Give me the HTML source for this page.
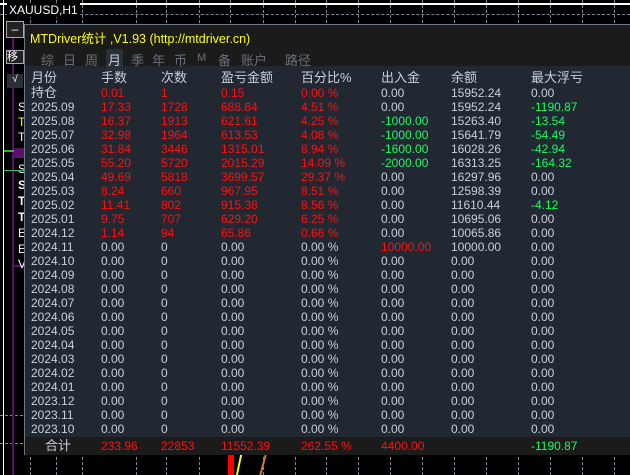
<!DOCTYPE html>
<html><head><meta charset="utf-8"><style>
*{margin:0;padding:0;box-sizing:border-box}
body{width:630px;height:475px;background:#000;position:relative;overflow:hidden;font-family:"Liberation Sans","Noto Sans CJK SC",sans-serif;font-size:12px}
.a{position:absolute}
.dh{position:absolute;left:0;width:630px;border-top:1px dashed #7a8a9a}
.dv{position:absolute;top:0;height:475px;border-left:1px dashed #7a8a9a}
#p{position:absolute;left:24px;top:24px;width:610px;height:431px;background:#222832;border:1px solid #6a7888}
#hd{position:absolute;left:0;top:0;width:100%;height:41px;background:#1b1b1b}
.t{position:absolute;top:25px;color:#6a7078;font-size:13px}
.r{position:absolute;left:0;height:14px;line-height:14px;width:100%;color:#c8d0dc}
.r span{position:absolute;top:0}
.c0{left:6px}.c1{left:76px}.c2{left:136px}.c3{left:196px}.c4{left:276px}.c5{left:356px}.c6{left:426px}.c7{left:506px}
.R{color:#ff1010}.G{color:#10ff60}
</style></head><body>
<div class="a" style="left:0;top:3px;width:630px;height:2px;background:#fff"></div>
<div class="a" style="left:3px;top:0;width:1px;height:475px;background:#fff"></div>
<div class="dh" style="top:14px"></div>
<div class="dh" style="top:415px"></div>
<div class="dh" style="top:443px"></div>
<div class="dv" style="left:30px"></div><div class="dv" style="left:56px"></div><div class="dv" style="left:82px"></div><div class="dv" style="left:136px"></div><div class="dv" style="left:166px"></div><div class="dv" style="left:199px"></div><div class="dv" style="left:230px"></div><div class="dv" style="left:263px"></div><div class="dv" style="left:295px"></div><div class="dv" style="left:326px"></div><div class="dv" style="left:358px"></div><div class="dv" style="left:390px"></div><div class="dv" style="left:422px"></div><div class="dv" style="left:454px"></div><div class="dv" style="left:486px"></div><div class="dv" style="left:518px"></div><div class="dv" style="left:550px"></div><div class="dv" style="left:582px"></div><div class="dv" style="left:614px"></div>
<div class="a" style="left:7px;top:3px;color:#fff;font-size:12px;background:#000;padding:0 2px">XAUUSD,H1</div>
<div class="a" style="left:12px;top:30px;width:2px;height:445px;background:#5a1070"></div>
<div class="a" style="left:12px;top:148px;width:14px;height:10px;background:#5a1070"></div>
<div class="a" style="left:12px;top:265px;width:14px;height:2px;background:#5a1070"></div>
<div class="a" style="left:6px;top:21px;width:18px;height:17px;border:1px solid #aaa;background:#222;color:#fff;text-align:center;line-height:15px">–</div>
<div class="a" style="left:6px;top:50px;width:18px;height:14px;border:1px solid #aaa;background:#222;color:#fff;font-size:11px;line-height:12px">移</div>
<div class="a" style="left:7px;top:74px;width:16px;height:14px;background:#2a3038;color:#fff;font-size:10px;text-align:center">√</div>
<div class="a" style="left:18px;top:100px;color:#fff">S</div><div class="a" style="left:18px;top:115px;color:#ff0">T</div><div class="a" style="left:18px;top:130px;color:#fff">T</div><div class="a" style="left:18px;top:162px;color:#fff">S</div><div class="a" style="left:18px;top:178px;color:#fff;font-weight:bold">S</div><div class="a" style="left:18px;top:194px;color:#fff;font-weight:bold">T</div><div class="a" style="left:18px;top:210px;color:#fff;font-weight:bold">T</div><div class="a" style="left:18px;top:226px;color:#fff">E</div><div class="a" style="left:18px;top:242px;color:#fff">E</div><div class="a" style="left:18px;top:257px;color:#fff">V</div>
<div class="a" style="left:4px;top:150px;width:10px;height:2px;background:#20c020"></div>
<div class="a" style="left:4px;top:170px;width:20px;height:1px;background:#30c070"></div>
<div class="a" style="left:228px;top:455px;width:6px;height:20px;background:#ff0000"></div>
<div class="a" style="left:238px;top:455px;width:2px;height:20px;background:#ff0;transform:skewX(-12deg)"></div>
<div class="a" style="left:262px;top:455px;width:2px;height:20px;background:#d08030;transform:skewX(-15deg)"></div>
<div id="p">
<div id="hd">
<div class="a" style="left:5px;top:3px;color:#ffff00;font-size:12.5px">MTDriver统计 ,V1.93 (http://mtdriver.cn)</div>
<span class="t" style="left:16px">综</span><span class="t" style="left:38px">日</span><span class="t" style="left:60px">周</span><span class="t" style="left:81px;top:24px;padding:1px 2px;color:#c8d0dc;background:#2a3038">月</span><span class="t" style="left:106px">季</span><span class="t" style="left:127px">年</span><span class="t" style="left:149px">币</span><span class="t" style="left:172px;font-size:11px;top:27px">M</span><span class="t" style="left:193px">备</span><span class="t" style="left:216px">账户</span><span class="t" style="left:260px">路径</span>
</div>
<div class="r" style="top:46px;font-size:13px"><span class="c0">月份</span><span class="c1">手数</span><span class="c2">次数</span><span class="c3">盈亏金额</span><span class="c4">百分比%</span><span class="c5">出入金</span><span class="c6">余额</span><span class="c7">最大浮亏</span></div>
<div class="r" style="top:61px;font-size:13px"><span class="c0">持仓</span><span class="c1 R" style="font-size:12px">0.01</span><span class="c2 R" style="font-size:12px">1</span><span class="c3 R" style="font-size:12px">0.15</span><span class="c4 R" style="font-size:12px">0.00 %</span><span class="c5" style="font-size:12px">0.00</span><span class="c6" style="font-size:12px">15952.24</span><span class="c7" style="font-size:12px">0.00</span></div>
<div class="r" style="top:75px"><span class="c0">2025.09</span><span class="c1 R">17.33</span><span class="c2 R">1728</span><span class="c3 R">688.84</span><span class="c4 R">4.51 %</span><span class="c5">0.00</span><span class="c6">15952.24</span><span class="c7 G">-1190.87</span></div>
<div class="r" style="top:89px"><span class="c0">2025.08</span><span class="c1 R">16.37</span><span class="c2 R">1913</span><span class="c3 R">621.61</span><span class="c4 R">4.25 %</span><span class="c5 G">-1000.00</span><span class="c6">15263.40</span><span class="c7 G">-13.54</span></div>
<div class="r" style="top:103px"><span class="c0">2025.07</span><span class="c1 R">32.98</span><span class="c2 R">1964</span><span class="c3 R">613.53</span><span class="c4 R">4.08 %</span><span class="c5 G">-1000.00</span><span class="c6">15641.79</span><span class="c7 G">-54.49</span></div>
<div class="r" style="top:117px"><span class="c0">2025.06</span><span class="c1 R">31.84</span><span class="c2 R">3446</span><span class="c3 R">1315.01</span><span class="c4 R">8.94 %</span><span class="c5 G">-1600.00</span><span class="c6">16028.26</span><span class="c7 G">-42.94</span></div>
<div class="r" style="top:131px"><span class="c0">2025.05</span><span class="c1 R">55.20</span><span class="c2 R">5720</span><span class="c3 R">2015.29</span><span class="c4 R">14.09 %</span><span class="c5 G">-2000.00</span><span class="c6">16313.25</span><span class="c7 G">-164.32</span></div>
<div class="r" style="top:145px"><span class="c0">2025.04</span><span class="c1 R">49.69</span><span class="c2 R">5818</span><span class="c3 R">3699.57</span><span class="c4 R">29.37 %</span><span class="c5">0.00</span><span class="c6">16297.96</span><span class="c7">0.00</span></div>
<div class="r" style="top:159px"><span class="c0">2025.03</span><span class="c1 R">8.24</span><span class="c2 R">660</span><span class="c3 R">967.95</span><span class="c4 R">8.51 %</span><span class="c5">0.00</span><span class="c6">12598.39</span><span class="c7">0.00</span></div>
<div class="r" style="top:173px"><span class="c0">2025.02</span><span class="c1 R">11.41</span><span class="c2 R">802</span><span class="c3 R">915.38</span><span class="c4 R">8.56 %</span><span class="c5">0.00</span><span class="c6">11610.44</span><span class="c7 G">-4.12</span></div>
<div class="r" style="top:187px"><span class="c0">2025.01</span><span class="c1 R">9.75</span><span class="c2 R">707</span><span class="c3 R">629.20</span><span class="c4 R">6.25 %</span><span class="c5">0.00</span><span class="c6">10695.06</span><span class="c7">0.00</span></div>
<div class="r" style="top:201px"><span class="c0">2024.12</span><span class="c1 R">1.14</span><span class="c2 R">94</span><span class="c3 R">65.86</span><span class="c4 R">0.66 %</span><span class="c5">0.00</span><span class="c6">10065.86</span><span class="c7">0.00</span></div>
<div class="r" style="top:215px"><span class="c0">2024.11</span><span class="c1">0.00</span><span class="c2">0</span><span class="c3">0.00</span><span class="c4">0.00 %</span><span class="c5 R">10000.00</span><span class="c6">10000.00</span><span class="c7">0.00</span></div>
<div class="r" style="top:229px"><span class="c0">2024.10</span><span class="c1">0.00</span><span class="c2">0</span><span class="c3">0.00</span><span class="c4">0.00 %</span><span class="c5">0.00</span><span class="c6">0.00</span><span class="c7">0.00</span></div>
<div class="r" style="top:243px"><span class="c0">2024.09</span><span class="c1">0.00</span><span class="c2">0</span><span class="c3">0.00</span><span class="c4">0.00 %</span><span class="c5">0.00</span><span class="c6">0.00</span><span class="c7">0.00</span></div>
<div class="r" style="top:257px"><span class="c0">2024.08</span><span class="c1">0.00</span><span class="c2">0</span><span class="c3">0.00</span><span class="c4">0.00 %</span><span class="c5">0.00</span><span class="c6">0.00</span><span class="c7">0.00</span></div>
<div class="r" style="top:271px"><span class="c0">2024.07</span><span class="c1">0.00</span><span class="c2">0</span><span class="c3">0.00</span><span class="c4">0.00 %</span><span class="c5">0.00</span><span class="c6">0.00</span><span class="c7">0.00</span></div>
<div class="r" style="top:285px"><span class="c0">2024.06</span><span class="c1">0.00</span><span class="c2">0</span><span class="c3">0.00</span><span class="c4">0.00 %</span><span class="c5">0.00</span><span class="c6">0.00</span><span class="c7">0.00</span></div>
<div class="r" style="top:299px"><span class="c0">2024.05</span><span class="c1">0.00</span><span class="c2">0</span><span class="c3">0.00</span><span class="c4">0.00 %</span><span class="c5">0.00</span><span class="c6">0.00</span><span class="c7">0.00</span></div>
<div class="r" style="top:313px"><span class="c0">2024.04</span><span class="c1">0.00</span><span class="c2">0</span><span class="c3">0.00</span><span class="c4">0.00 %</span><span class="c5">0.00</span><span class="c6">0.00</span><span class="c7">0.00</span></div>
<div class="r" style="top:327px"><span class="c0">2024.03</span><span class="c1">0.00</span><span class="c2">0</span><span class="c3">0.00</span><span class="c4">0.00 %</span><span class="c5">0.00</span><span class="c6">0.00</span><span class="c7">0.00</span></div>
<div class="r" style="top:341px"><span class="c0">2024.02</span><span class="c1">0.00</span><span class="c2">0</span><span class="c3">0.00</span><span class="c4">0.00 %</span><span class="c5">0.00</span><span class="c6">0.00</span><span class="c7">0.00</span></div>
<div class="r" style="top:355px"><span class="c0">2024.01</span><span class="c1">0.00</span><span class="c2">0</span><span class="c3">0.00</span><span class="c4">0.00 %</span><span class="c5">0.00</span><span class="c6">0.00</span><span class="c7">0.00</span></div>
<div class="r" style="top:369px"><span class="c0">2023.12</span><span class="c1">0.00</span><span class="c2">0</span><span class="c3">0.00</span><span class="c4">0.00 %</span><span class="c5">0.00</span><span class="c6">0.00</span><span class="c7">0.00</span></div>
<div class="r" style="top:383px"><span class="c0">2023.11</span><span class="c1">0.00</span><span class="c2">0</span><span class="c3">0.00</span><span class="c4">0.00 %</span><span class="c5">0.00</span><span class="c6">0.00</span><span class="c7">0.00</span></div>
<div class="r" style="top:397px"><span class="c0">2023.10</span><span class="c1">0.00</span><span class="c2">0</span><span class="c3">0.00</span><span class="c4">0.00 %</span><span class="c5">0.00</span><span class="c6">0.00</span><span class="c7">0.00</span></div>
<div class="a" style="left:0;top:412px;width:100%;height:18px;background:#1b1b1b"></div>
<div class="r" style="top:414px"><span style="left:20px;font-size:13px">合计</span><span class="c1 R">233.96</span><span class="c2 R">22853</span><span class="c3 R">11552.39</span><span class="c4 R">262.55 %</span><span class="c5 R">4400.00</span><span class="c7 G">-1190.87</span></div>
</div>
</body></html>
